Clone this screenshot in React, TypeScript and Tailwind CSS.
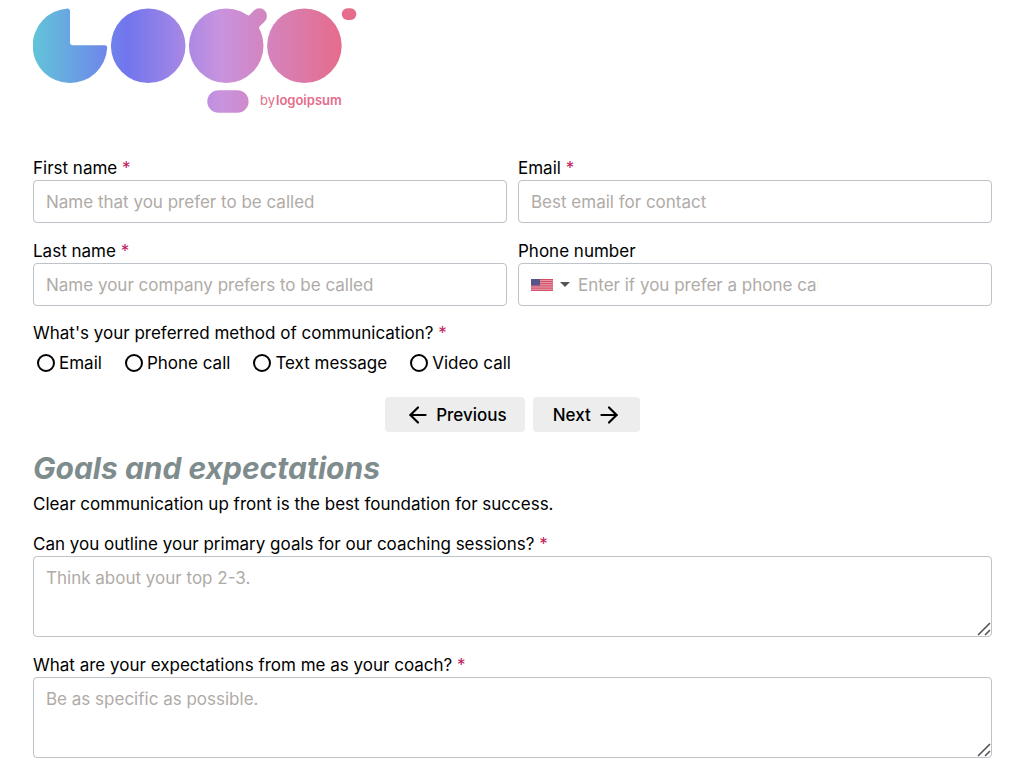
import type { ReactNode } from "react";
import { ArrowLeft, ArrowRight } from "lucide-react";

interface FieldProps {
  id: string;
  label: string;
  required?: boolean;
  children: ReactNode;
}

interface TextAreaProps {
  id: string;
  label: string;
  placeholder: string;
}

const boxClass =
  "w-full rounded border border-[#bdc3c9] bg-white px-3 outline-none placeholder:text-[#afaba7] focus:border-slate-500";

const navButtonClass =
  "flex h-[35px] items-center gap-[5px] rounded bg-[#ededed] pr-[18px] pl-5 hover:bg-gray-200";

const contactMethods = [
  { value: "email", label: "Email" },
  { value: "phone", label: "Phone call" },
  { value: "text", label: "Text message" },
  { value: "video", label: "Video call" },
];

const stripes = [0, 2, 4, 6, 8, 10, 12];

function Required() {
  return <span className="text-[#c2185b]"> *</span>;
}

function Logo() {
  return (
    <svg
      width="324"
      height="105"
      viewBox="33 8 324 105"
      role="img"
      aria-label="Logo by logoipsum"
    >
      <defs>
        <linearGradient id="brand" gradientUnits="userSpaceOnUse" x1="33" y1="0" x2="342" y2="0">
          <stop offset="0" stopColor="#62c4d9" />
          <stop offset="0.305" stopColor="#7275ee" />
          <stop offset="0.605" stopColor="#c893de" />
          <stop offset="1" stopColor="#e66c8b" />
        </linearGradient>
      </defs>
      <g fill="url(#brand)">
        <path d="M67.5 8.5Q70 8.3 70 11V42.3Q70 45.3 73 45.3H104.5Q107.3 45.3 107.2 48A37.3 37.3 0 1 1 67.5 8.5Z" />
        <circle cx="148.2" cy="45.7" r="37.3" />
        <circle cx="226.2" cy="45.7" r="37.3" />
        <path d="M247.2 15.6Q248.6 16 249.8 14.8L253.9 10.6A7.6 7.6 0 0 1 264.7 21.4L259.5 26.6Q258.5 27.6 259 29L244 34Z" />
        <circle cx="304.4" cy="45.7" r="37.3" />
        <rect x="341.7" y="8.3" width="14.7" height="11.6" rx="5.8" />
        <rect x="207.3" y="90.2" width="41.3" height="22.6" rx="11.3" />
      </g>
      <g fill="#e66c8b" fontFamily="Inter, sans-serif" fontSize="13">
        <text x="260" y="105">by</text>
        <text x="276" y="105" fontWeight="600">logoipsum</text>
      </g>
    </svg>
  );
}

function Field({ id, label, required = false, children }: FieldProps) {
  return (
    <div>
      <label htmlFor={id} className="block">
        {label}
        {required && <Required />}
      </label>
      {children}
    </div>
  );
}

function TextArea({ id, label, placeholder }: TextAreaProps) {
  return (
    <Field id={id} label={label} required>
      <div className="relative">
        <textarea
          id={id}
          placeholder={placeholder}
          className={`${boxClass} block h-[81px] resize-y py-[9px] [&::-webkit-resizer]:hidden`}
        />
        {/* resize grip */}
        <svg
          className="pointer-events-none absolute right-px bottom-px"
          width="14"
          height="14"
          viewBox="0 0 14 14"
          stroke="#555"
          strokeWidth="1.6"
        >
          <path d="M1 13L13 1M8 13L13 8" />
        </svg>
      </div>
    </Field>
  );
}

function UsFlag() {
  return (
    <svg width="22" height="12" viewBox="0 0 22 13" preserveAspectRatio="none" className="opacity-80">
      <rect width="22" height="13" fill="#fff" />
      {stripes.map((y) => (
        <rect key={y} y={y} width="22" height="1.3" fill="#c8203f" />
      ))}
      <rect width="22" height="13" fill="#c8203f" opacity="0.35" />
      <rect width="9" height="7" fill="#2c2a6b" />
    </svg>
  );
}

export default function App() {
  return (
    <main className="bg-white pt-2 pr-8 pb-[10px] pl-[33px] font-['Inter',sans-serif] text-[17px] leading-6 text-black">
      <header>
        <Logo />
      </header>

      <form className="mt-[43px]" onSubmit={(e) => e.preventDefault()}>
        <div className="grid grid-cols-2 gap-x-[11px] gap-y-4">
          <Field id="first-name" label="First name" required>
            <input
              id="first-name"
              type="text"
              placeholder="Name that you prefer to be called"
              className={`${boxClass} block h-[43px]`}
            />
          </Field>
          <Field id="email" label="Email" required>
            <input
              id="email"
              type="email"
              placeholder="Best email for contact"
              className={`${boxClass} block h-[43px]`}
            />
          </Field>
          <Field id="last-name" label="Last name" required>
            <input
              id="last-name"
              type="text"
              placeholder="Name your company prefers to be called"
              className={`${boxClass} block h-[43px]`}
            />
          </Field>
          <Field id="phone" label="Phone number">
            <div className={`${boxClass} flex h-[43px] items-center gap-2`}>
              <button type="button" aria-label="Country" className="flex items-center gap-[7px]">
                <UsFlag />
                <svg width="10" height="5" viewBox="0 0 10 5" fill="#555">
                  <path d="M0 0H10L5 5Z" />
                </svg>
              </button>
              <input
                id="phone"
                type="tel"
                placeholder="Enter if you prefer a phone call"
                className="w-60 outline-none placeholder:text-[#afaba7]"
              />
            </div>
          </Field>
        </div>

        <fieldset className="mt-[15px]">
          <legend>
            What's your preferred method of communication?
            <Required />
          </legend>
          <div className="mt-[6px] flex flex-wrap gap-x-[23px] pl-1">
            {contactMethods.map((method) => (
              <label key={method.value} className="flex items-center gap-1">
                <input
                  type="radio"
                  name="contact-method"
                  value={method.value}
                  className="size-[18px] appearance-none rounded-full border-2 border-black checked:border-[6px]"
                />
                {method.label}
              </label>
            ))}
          </div>
        </fieldset>

        <div className="mt-[22px] flex justify-center gap-2 font-medium">
          <button type="button" className={navButtonClass}>
            <ArrowLeft className="size-[26px]" />
            Previous
          </button>
          <button type="button" className={navButtonClass}>
            Next
            <ArrowRight className="size-[26px]" />
          </button>
        </div>

        <section className="mt-4">
          <h2 className="text-[30px] leading-10 font-bold text-[#7f8c8d] italic">
            Goals and expectations
          </h2>
          <p className="mt-1">Clear communication up front is the best foundation for success.</p>
          <div className="mt-4 flex flex-col gap-4">
            <TextArea
              id="goals"
              label="Can you outline your primary goals for our coaching sessions?"
              placeholder="Think about your top 2-3."
            />
            <TextArea
              id="expectations"
              label="What are your expectations from me as your coach?"
              placeholder="Be as specific as possible."
            />
          </div>
        </section>
      </form>
    </main>
  );
}
